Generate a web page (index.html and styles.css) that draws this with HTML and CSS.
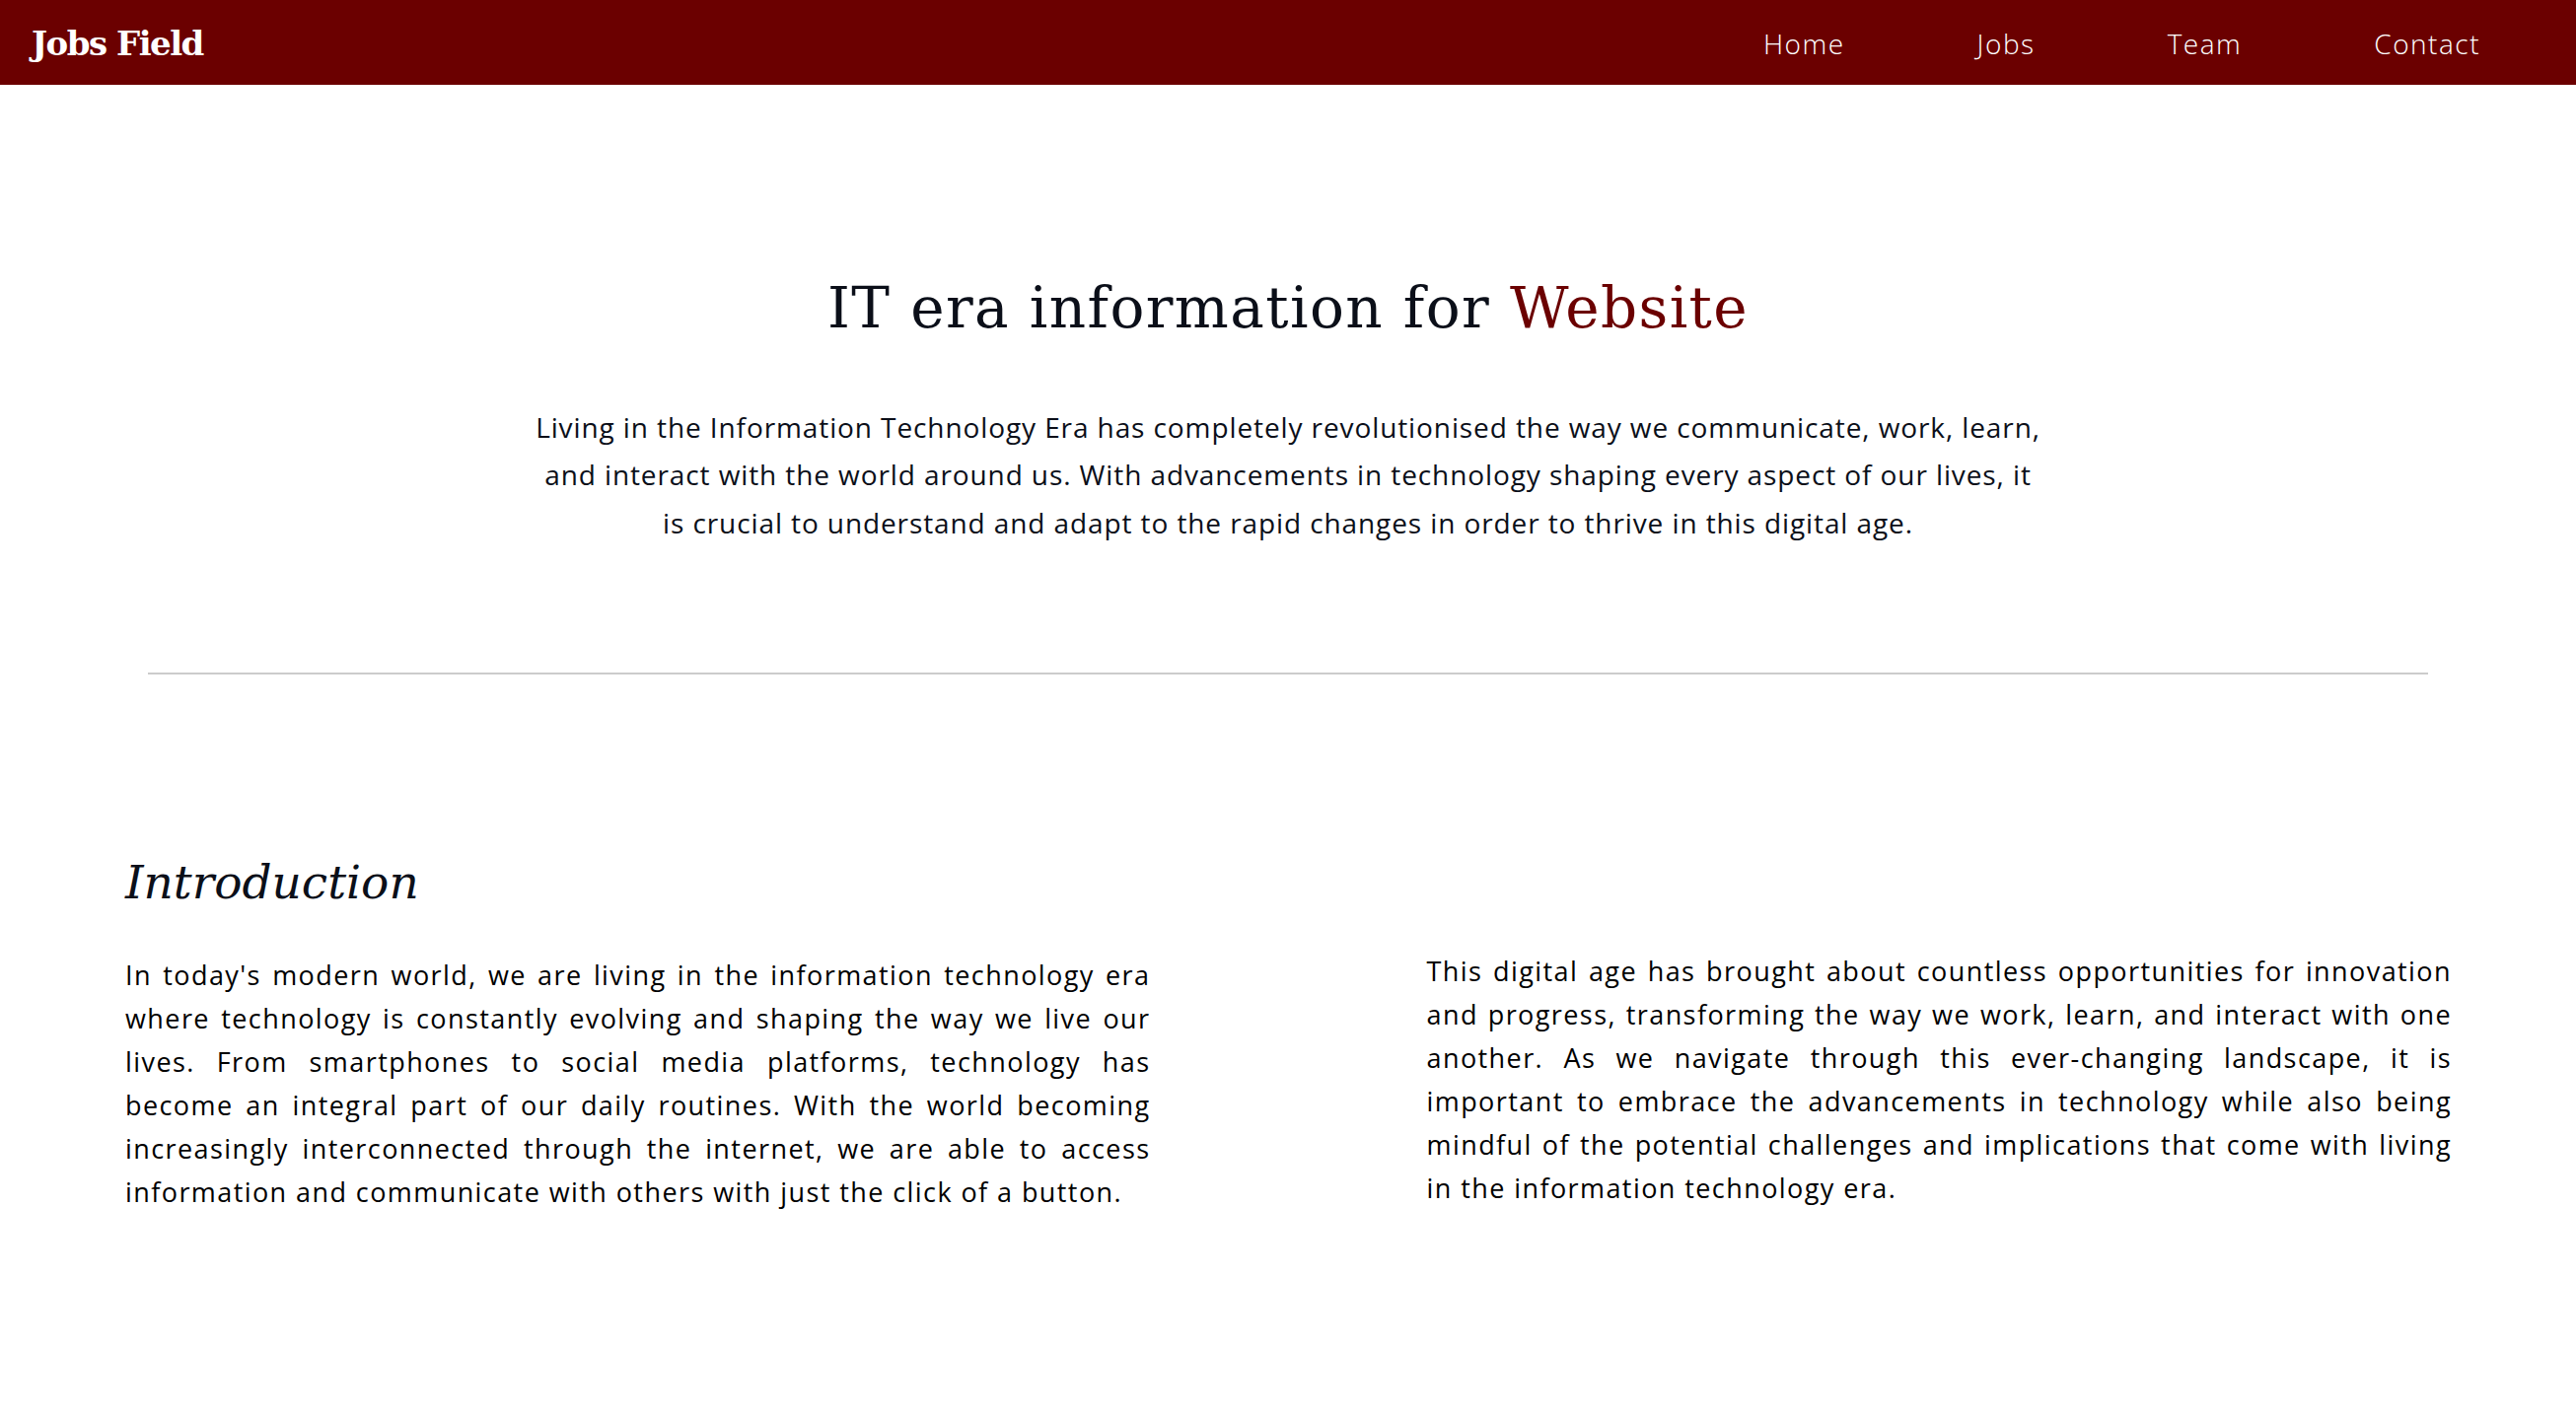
FILE: index.html
```html
<!DOCTYPE html>
<html lang="en">
<head>
<meta charset="utf-8">
<title>Jobs Field</title>
<link rel="stylesheet" href="styles.css">
</head>
<body>
<header class="navbar">
  <div class="brand">Jobs Field</div>
  <nav class="nav-links">
    <a href="#">Home</a>
    <a href="#">Jobs</a>
    <a href="#">Team</a>
    <a href="#">Contact</a>
  </nav>
</header>
<main>
  <section class="hero">
    <h1 class="hero-title">IT era information for <span class="accent">Website</span></h1>
    <p class="hero-text">Living in the Information Technology Era has completely revolutionised the way we communicate, work, learn, and interact with the world around us. With advancements in technology shaping every aspect of our lives, it is crucial to understand and adapt to the rapid changes in order to thrive in this digital age.</p>
  </section>
  <hr class="divider">
  <section class="intro">
    <div class="col col-left">
      <h2 class="intro-title">Introduction</h2>
      <p class="intro-text">In today's modern world, we are living in the information technology era where technology is constantly evolving and shaping the way we live our lives. From smartphones to social media platforms, technology has become an integral part of our daily routines. With the world becoming increasingly interconnected through the internet, we are able to access information and communicate with others with just the click of a button.</p>
    </div>
    <div class="col col-right">
      <p class="intro-text">This digital age has brought about countless opportunities for innovation and progress, transforming the way we work, learn, and interact with one another. As we navigate through this ever-changing landscape, it is important to embrace the advancements in technology while also being mindful of the potential challenges and implications that come with living in the information technology era.</p>
    </div>
  </section>
</main>
</body>
</html>
```
FILE: styles.css
```css
* { box-sizing: border-box; }
html, body { margin: 0; padding: 0; background: #ffffff; }
body {
  font-family: "Open Sans", "Noto Sans", sans-serif;
  color: #0b0f19;
}
.navbar {
  height: 86px;
  background: #6b0000;
  display: flex;
  align-items: center;
  justify-content: space-between;
  padding: 2px 97px 0 32px;
}
.brand {
  font-family: "DejaVu Serif", "Liberation Serif", serif;
  font-weight: bold;
  font-size: 34px;
  color: #ffffff;
  letter-spacing: -1.5px;
}
.nav-links {
  display: flex;
  gap: 134px;
}
.nav-links a {
  color: #ffffff;
  text-decoration: none;
  font-size: 28px;
  font-weight: 300;
  letter-spacing: 1.5px;
}
.hero {
  padding-top: 192px;
  text-align: center;
}
.hero-title {
  margin: 0;
  font-family: "DejaVu Serif", "Liberation Serif", serif;
  font-weight: normal;
  font-size: 58px;
  letter-spacing: 1.4px;
  line-height: 68px;
  color: #0b0f19;
}
.accent { color: #6b0000; }
.hero-text {
  margin: 63px auto 0;
  max-width: 1533px;
  font-size: 28px;
  letter-spacing: 0.9px;
  line-height: 48.3px;
  color: #0b0f19;
}
.divider {
  margin: 128px 150px 0;
  border: 0;
  height: 2px;
  background: #cccccc;
}
.intro {
  display: flex;
  align-items: flex-end;
  gap: 280px;
  padding: 182px 126px 0 127px;
}
.col { flex: 1 1 0; }
.col-right { margin-bottom: 4px; }
.intro-title {
  margin: 0;
  font-family: "DejaVu Serif", "Liberation Serif", serif;
  font-style: italic;
  font-weight: normal;
  font-size: 47px;
  line-height: 58px;
  color: #0b0f19;
}
.intro-text {
  margin: 43px 0 0;
  font-size: 27px;
  letter-spacing: 1.42px;
  line-height: 44px;
  text-align: justify;
  color: #000000;
}
```
